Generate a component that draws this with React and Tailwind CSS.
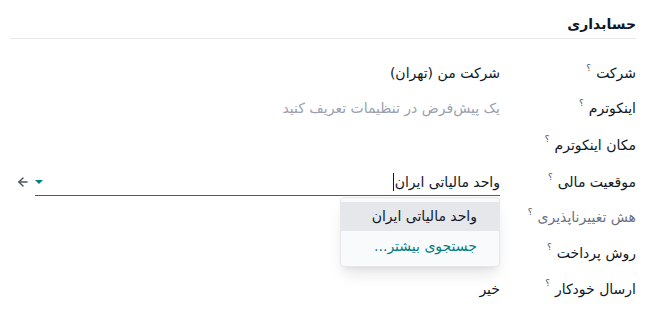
import { ArrowLeft } from "lucide-react";

const font = { fontFamily: '"DejaVu Sans", sans-serif' };

function Label({ children, muted }) {
  return (
    <div className={`w-[136px] shrink-0 flex items-center ${muted ? "text-gray-500" : "text-gray-900"} font-medium`}>
      <span>{children}</span>
      <span className="text-[9px] text-gray-600 mr-[5px] relative -top-[5px]">؟</span>
    </div>
  );
}

function Row({ label, h, muted, children }) {
  return (
    <div className={`flex items-center ${h}`}>
      <Label muted={muted}>{label}</Label>
      <div className="flex-1">{children}</div>
    </div>
  );
}

export default function App() {
  return (
    <div dir="rtl" className="w-[646px] h-[334px] bg-white text-[14px] overflow-hidden" style={font}>
      <div className="pr-[10px] pl-[16px]">
        <div className="pt-[14px] pb-[3px] font-bold text-gray-900 border-b border-gray-200 ml-[-6px]">
          حسابداری
        </div>
        <div className="mt-[18px]">
          <Row label="شرکت" h="h-[33px]">
            <span className="text-gray-900">شرکت من (تهران)</span>
          </Row>
          <Row label="اینکوترم" h="h-[37px]">
            <span className="text-gray-400">یک پیش‌فرض در تنظیمات تعریف کنید</span>
          </Row>
          <Row label="مکان اینکوترم" h="h-[36px]" />
          <div className="flex items-start h-[37px] pt-[6px] relative">
            <div className="h-[27px] flex items-center">
              <Label>موقعیت مالی</Label>
            </div>
            <div className="flex-1 flex items-center">
              <div className="flex-1 flex items-center border-b border-[#017e84] h-[27px]">
                <span className="text-gray-900">واحد مالیاتی ایران</span>
                <span className="w-px h-[18px] bg-gray-900 mr-[1px]" />
                <span className="flex-1" />
                <span className="w-0 h-0 border-l-[4px] border-r-[4px] border-t-[4px] border-l-transparent border-r-transparent border-t-[#017e84]" />
              </div>
              <ArrowLeft className="w-[14px] h-[14px] text-gray-600 mr-[5px] -mt-[1px]" strokeWidth={2.5} />
            </div>
            <div className="absolute right-[136px] top-[34px] w-[160px] bg-[#f9fafb] rounded-[4px] border border-gray-200 shadow-lg py-[4px] z-10">
              <div className="bg-gray-200 h-[29px] flex items-center pr-[22px] text-gray-900">واحد مالیاتی ایران</div>
              <div className="h-[31px] flex items-center pr-[22px] text-[#017e84]">جستجوی بیشتر...</div>
            </div>
          </div>
          <Row label="هش تغییرناپذیری" h="h-[35px]" muted />
          <Row label="روش پرداخت" h="h-[36px]" />
          <Row label="ارسال خودکار" h="h-[36px]">
            <span className="text-gray-900">خیر</span>
          </Row>
        </div>
      </div>
    </div>
  );
}
